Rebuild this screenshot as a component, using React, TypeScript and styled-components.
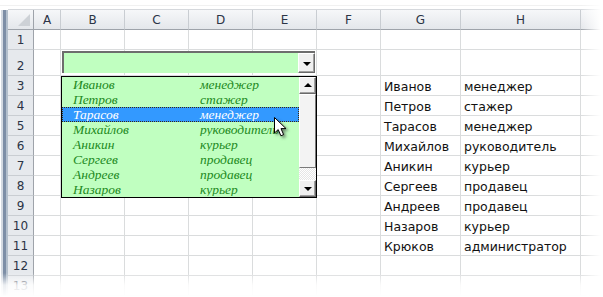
import React from 'react';
import styled, { createGlobalStyle, css } from 'styled-components';

const GlobalStyle = createGlobalStyle`
  html, body {
    margin: 0;
    padding: 0;
    background: #fff;
  }
`;

const COLUMNS = ['A', 'B', 'C', 'D', 'E', 'F', 'G', 'H'];
const ROWS = [1, 2, 3, 4, 5, 6, 7, 8, 9, 10, 11, 12, 13];

const staff: [string, string][] = [
  ['Иванов', 'менеджер'],
  ['Петров', 'стажер'],
  ['Тарасов', 'менеджер'],
  ['Михайлов', 'руководитель'],
  ['Аникин', 'курьер'],
  ['Сергеев', 'продавец'],
  ['Андреев', 'продавец'],
  ['Назаров', 'курьер'],
  ['Крюков', 'администратор'],
];

const SELECTED = 2;

export default function App() {
  return (
    <>
      <GlobalStyle />
      <Page>
        <TopEdge />
        <Body>
          <Frame />
          <Sheet>
            <Corner>
              <CornerTriangle />
            </Corner>
            {COLUMNS.map((c) => (
              <ColHeader key={c}>{c}</ColHeader>
            ))}
            <ColHeader $last />
            {ROWS.map((r) => {
              const entry = r >= 3 ? staff[r - 3] : undefined;
              return (
                <React.Fragment key={r}>
                  <RowHeader $tall={r === 2}>{r}</RowHeader>
                  {COLUMNS.map((c) => (
                    <Cell key={c}>
                      {entry && c === 'G' && entry[0]}
                      {entry && c === 'H' && entry[1]}
                    </Cell>
                  ))}
                  <Cell />
                </React.Fragment>
              );
            })}
          </Sheet>
        </Body>

        {/* combo box in B2:E2 */}
        <Combo>
          <ComboField />
          <ScrollButton $h={20}>
            <Arrow $down />
          </ScrollButton>
        </Combo>

        {/* opened drop-down list */}
        <ListBox>
          <Items>
            {staff.slice(0, 8).map(([name, role], i) => (
              <Item key={name} $selected={i === SELECTED}>
                <NameCol>{name}</NameCol>
                <span>{role}</span>
              </Item>
            ))}
          </Items>
          <ScrollBar>
            <ScrollButton $h={17}>
              <Arrow />
            </ScrollButton>
            <Thumb />
            <Track />
            <ScrollButton $h={17}>
              <Arrow $down />
            </ScrollButton>
          </ScrollBar>
        </ListBox>

        <Pointer width="17" height="23" viewBox="0 0 17 23">
          <path
            d="M1.5 1.5 L1.5 17 L5.2 13.6 L7.9 19.8 L10.6 18.6 L8 12.6 L13 12.6 Z"
            fill="#fff"
            stroke="#000"
            strokeWidth="1"
          />
        </Pointer>

        <RightFade />
        <BottomFade />
      </Page>
    </>
  );
}

const Page = styled.div`
  position: relative;
  width: 603px;
  height: 297px;
  overflow: hidden;
  background: #fff;
  font-family: 'DejaVu Sans', sans-serif;
`;

const TopEdge = styled.div`
  height: 10px;
  background: linear-gradient(to bottom, #fff 0 5px, #f1f1f1 5px 6px, #fff 6px);
`;

const Body = styled.div`
  display: flex;
`;

const Frame = styled.div`
  width: 8px;
  flex-shrink: 0;
  background: linear-gradient(
    to right,
    #fff 0 1px,
    #d3d9e1 1px 3px,
    #7d8ea6 3px 6px,
    #b3bfcc 6px 8px
  );
`;

const Sheet = styled.div`
  flex: 1;
  display: grid;
  grid-template-columns: 26px 27px 64px 64px 64px 64px 64px 80px 120px 1fr;
  grid-template-rows: 20px 20px 26px repeat(11, 20px);
  border-top: 1px solid #d5d8dc;
  margin-top: -1px;
`;

const headerBase = css`
  box-sizing: border-box;
  background: linear-gradient(to bottom, #f6f7f9, #e4e7eb);
  color: #2b3446;
  font-size: 12px;
  display: flex;
  align-items: center;
  justify-content: center;
  border-right: 1px solid #c9cdd2;
  border-bottom: 1px solid #9ea3aa;
`;

const Corner = styled.div`
  ${headerBase};
  position: relative;
  border-right: 1px solid #9ea3aa;
`;

const CornerTriangle = styled.div`
  position: absolute;
  right: 3px;
  bottom: 3px;
  width: 0;
  height: 0;
  border-left: 12px solid transparent;
  border-bottom: 12px solid #cdd1d6;
`;

const ColHeader = styled.div<{ $last?: boolean }>`
  ${headerBase};
  ${(p) => p.$last && 'border-right: none;'}
`;

const RowHeader = styled.div<{ $tall?: boolean }>`
  ${headerBase};
  background: #e6e9ed;
  border-right: 1px solid #9ea3aa;
  border-bottom: 1px solid #c9cdd2;
  align-items: ${(p) => (p.$tall ? 'flex-end' : 'center')};
  padding-bottom: ${(p) => (p.$tall ? '2px' : '0')};
`;

const Cell = styled.div`
  box-sizing: border-box;
  border-right: 1px solid #dadcdd;
  border-bottom: 1px solid #dadcdd;
  font-size: 12.5px;
  color: #111;
  padding: 1px 0 0 3px;
  display: flex;
  align-items: center;
  white-space: nowrap;
`;

const Combo = styled.div`
  position: absolute;
  left: 62px;
  top: 51px;
  width: 253px;
  height: 22px;
  box-sizing: border-box;
  display: flex;
  align-items: flex-end;
  background: #c0ffc0;
  border-top: 2px solid #6d6d6d;
  border-left: 2px solid #6d6d6d;
`;

const ComboField = styled.div`
  flex: 1;
  align-self: stretch;
`;

const ScrollButton = styled.div<{ $h: number }>`
  width: 17px;
  height: ${(p) => p.$h}px;
  box-sizing: border-box;
  background: #f0f0f0;
  border: 1px solid;
  border-color: #fff #6a6a6a #6a6a6a #fff;
  box-shadow: inset -1px -1px 0 #a0a0a0;
  display: flex;
  align-items: center;
  justify-content: center;
  flex-shrink: 0;
`;

const Arrow = styled.div<{ $down?: boolean }>`
  width: 0;
  height: 0;
  border-left: 4px solid transparent;
  border-right: 4px solid transparent;
  ${(p) =>
    p.$down
      ? 'border-top: 4px solid #000; margin-top: 1px;'
      : 'border-bottom: 4px solid #000; margin-top: -1px;'}
`;

const ListBox = styled.div`
  position: absolute;
  left: 61px;
  top: 76px;
  width: 256px;
  height: 122px;
  box-sizing: border-box;
  border: 1px solid #000;
  background: #c0ffc0;
  display: flex;
`;

const Items = styled.div`
  flex: 1;
  display: flex;
  flex-direction: column;
`;

const Item = styled.div<{ $selected?: boolean }>`
  height: 15px;
  box-sizing: border-box;
  display: flex;
  align-items: center;
  padding-left: 10px;
  font-family: 'Liberation Serif', serif;
  font-style: italic;
  font-size: 13.5px;
  color: ${(p) => (p.$selected ? '#fff' : '#1d8a1d')};
  background: ${(p) => (p.$selected ? '#3399ff' : 'transparent')};
  border: 1px dotted ${(p) => (p.$selected ? '#3a2a10' : 'transparent')};
  white-space: nowrap;
  overflow: hidden;
`;

const NameCol = styled.span`
  width: 127px;
  flex-shrink: 0;
`;

const ScrollBar = styled.div`
  width: 17px;
  display: flex;
  flex-direction: column;
`;

const Thumb = styled.div`
  height: 74px;
  box-sizing: border-box;
  background: #f3f3f3;
  border: 1px solid;
  border-color: #fff #7a7a7a #7a7a7a #fff;
`;

const Track = styled.div`
  height: 12px;
  background-color: #f4f4f4;
  background-image: repeating-conic-gradient(#ffffff 0 25%, #e6e6e6 0 50%);
  background-size: 2px 2px;
`;

const Pointer = styled.svg`
  position: absolute;
  left: 273px;
  top: 116px;
  filter: drop-shadow(2px 2px 1.5px rgba(40, 40, 40, 0.55));
`;

const RightFade = styled.div`
  position: absolute;
  top: 0;
  right: 0;
  bottom: 0;
  width: 22px;
  background: linear-gradient(to right, rgba(255, 255, 255, 0), #fff 90%);
`;

const BottomFade = styled.div`
  position: absolute;
  left: 0;
  right: 0;
  bottom: 0;
  height: 24px;
  background: linear-gradient(to bottom, rgba(255, 255, 255, 0), rgba(255, 255, 255, 0.85) 50%, #fff);
`;
